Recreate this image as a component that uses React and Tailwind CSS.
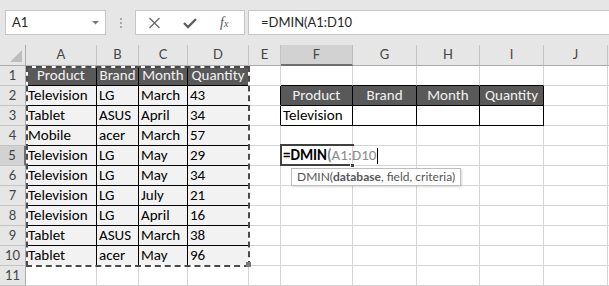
import React from "react";

const cols = ["A", "B", "C", "D", "E", "F", "G", "H", "I", "J", ""];

const table = [
  ["Product", "Brand", "Month", "Quantity"],
  ["Television", "LG", "March", "43"],
  ["Tablet", "ASUS", "April", "34"],
  ["Mobile", "acer", "March", "57"],
  ["Television", "LG", "May", "29"],
  ["Television", "LG", "May", "34"],
  ["Television", "LG", "July", "21"],
  ["Television", "LG", "April", "16"],
  ["Tablet", "ASUS", "March", "38"],
  ["Tablet", "acer", "May", "96"],
];

const criteria = ["Product", "Brand", "Month", "Quantity"];

const rows = [1, 2, 3, 4, 5, 6, 7, 8, 9, 10, 11];

const Toolbar = () => {
  return (
    <div className="flex h-[45px] items-start bg-[#e6e6e6] pl-[5px] pt-[10px] font-['Segoe_UI',Lato,sans-serif]">
      <div className="flex h-[25px] w-[101px] items-center justify-between border border-[#c6c6c6] bg-white pl-[6px] pr-[6px]">
        <span className="text-[13px] text-[#262626]">A1</span>
        <svg width="7" height="4" viewBox="0 0 7 4">
          <polygon points="0,0 7,0 3.5,3.5" fill="#7a7a7a" />
        </svg>
      </div>
      <div className="ml-[14px] mt-[8px] flex flex-col gap-[2px]">
        <div className="h-[2px] w-[2px] bg-[#a8a8a8]" />
        <div className="h-[2px] w-[2px] bg-[#a8a8a8]" />
        <div className="h-[2px] w-[2px] bg-[#a8a8a8]" />
      </div>
      <div className="ml-[13px] flex h-[25px] w-[110px] items-center border border-[#c6c6c6] bg-white pl-[12px]">
        <svg width="13" height="12" viewBox="0 0 13 12">
          <path d="M1.5 1 L11.5 11 M11.5 1 L1.5 11" stroke="#6a6a6a" strokeWidth="1.3" fill="none" />
        </svg>
        <svg className="ml-[22px]" width="14" height="12" viewBox="0 0 14 12">
          <polyline points="1,6 5,10 13,2" stroke="#5c5c5c" strokeWidth="2.3" fill="none" />
        </svg>
        <span className="ml-[23px] font-['Liberation_Serif',serif] text-[14px] italic leading-none text-[#555]">
          f<span className="text-[10px]">x</span>
        </span>
      </div>
      <div className="ml-[3px] flex h-[25px] flex-1 items-center border border-r-0 border-[#c6c6c6] bg-white pl-[12px] text-[13px] text-[#262626]">
        =DMIN(A1:D10
      </div>
    </div>
  );
};

const Cell = ({ r, c }) => {
  const inData = r <= 10 && c <= 3;
  const inCrit = (r === 2 || r === 3) && c >= 5 && c <= 8;
  const rightBlack = inData || ((r === 2 || r === 3) && c >= 4 && c <= 8);
  const bottomBlack = inData || (r >= 1 && r <= 3 && c >= 5 && c <= 8);
  const dark = (r === 1 && c <= 3) || (r === 2 && c >= 5 && c <= 8);

  let text = "";
  if (inData) text = table[r - 1][c];
  if (inCrit && r === 2) text = criteria[c - 5];
  if (r === 3 && c === 5) text = "Television";

  let bg = "";
  if (dark) bg = "bg-[#595959] text-[#f2f2f2] justify-center";
  else if (inData) bg = "bg-[#f2f2f2] text-black pl-[2px]";
  else bg = "text-black pl-[2px]";

  if (r === 5 && c === 5) {
    return (
      <div className="relative flex min-w-0 items-center overflow-visible border-b border-r border-[#d4d4d4] pl-[2px]">
        <div className="absolute -left-[1px] -top-[2px] h-[22px] w-[74px] border-2 border-r-0 border-[#404040]" />
        <div className="absolute left-[69px] top-[17px] h-[5px] w-[5px] border border-white bg-[#404040]" />
        <span className="relative z-10 flex items-center whitespace-nowrap">
          <span className="font-semibold text-black">=DMIN</span>
          <span className="font-semibold text-[#7f7f7f]">(</span>
          <span className="text-[#8a8a8a]">A1:D10</span>
          <span className="ml-[1px] h-[16px] w-[1px] bg-black" />
        </span>
      </div>
    );
  }

  return (
    <div
      className={
        "flex min-w-0 items-center overflow-hidden whitespace-nowrap border-b border-r " +
        bg +
        " " +
        (rightBlack ? "border-r-black " : "border-r-[#d4d4d4] ") +
        (bottomBlack ? "border-b-black" : "border-b-[#d4d4d4]")
      }
    >
      {text}
    </div>
  );
};

const Sheet = () => {
  return (
    <div className="relative grid grid-cols-[26px_71px_42px_49px_61px_32px_72px_64px_63px_64px_64px_1fr] grid-rows-[21px_repeat(11,20px)] font-[Carlito,Lato,sans-serif] text-[15px]">
      <div className="relative border-b border-r border-[#ababab] bg-[#e6e6e6]">
        <svg className="absolute left-[10px] top-[5px]" width="12" height="12" viewBox="0 0 12 12">
          <polygon points="12,0 12,12 0,12" fill="#bdbdbd" />
        </svg>
      </div>
      {cols.map((col, i) => (
        <div
          key={"h" + i}
          className={
            "flex items-center justify-center border-r font-['Segoe_UI',Lato,sans-serif] text-[13px] text-[#444] " +
            (col === "F"
              ? "border-b-2 border-b-[#6e6e6e] border-r-[#bcbcbc] bg-[#d2d2d2]"
              : "border-b border-b-[#ababab] border-r-[#c4c4c4] bg-[#e6e6e6]")
          }
        >
          {col}
        </div>
      ))}
      {rows.map((r) => (
        <React.Fragment key={r}>
          <div
            className={
              "flex items-center justify-center border-b font-['Segoe_UI',Lato,sans-serif] text-[13px] text-[#444] " +
              (r === 5
                ? "border-r-2 border-b-[#c4c4c4] border-r-[#6e6e6e] bg-[#d2d2d2]"
                : "border-r border-b-[#c4c4c4] border-r-[#ababab] bg-[#e6e6e6]")
            }
          >
            {r}
          </div>
          {cols.map((col, c) => (
            <Cell key={r + "-" + c} r={r} c={c} />
          ))}
        </React.Fragment>
      ))}

      {/* copy marquee around A1:D10 */}
      <div className="pointer-events-none absolute left-[26px] top-[21px] h-[201px] w-[224px] border-2 border-white">
        <div className="absolute -inset-[2px] border-2 border-dashed border-[#4a4a4a]" />
      </div>
      <div className="absolute left-[246px] top-[217px] h-[5px] w-[5px] bg-[#7a7a7a]" />

      {/* function tooltip */}
      <div className="absolute left-[291px] top-[123px] flex h-[18px] items-center border border-[#bdbdbd] bg-white px-[5px] font-['Segoe_UI',Lato,sans-serif] text-[12px] text-[#555] shadow-[1px_1px_2px_rgba(0,0,0,0.15)]">
        DMIN(<span className="font-bold">database</span>, field, criteria)
      </div>
    </div>
  );
};

const App = () => {
  return (
    <div className="h-[286px] w-[609px] overflow-hidden bg-white">
      <Toolbar />
      <Sheet />
    </div>
  );
};

export default App;
